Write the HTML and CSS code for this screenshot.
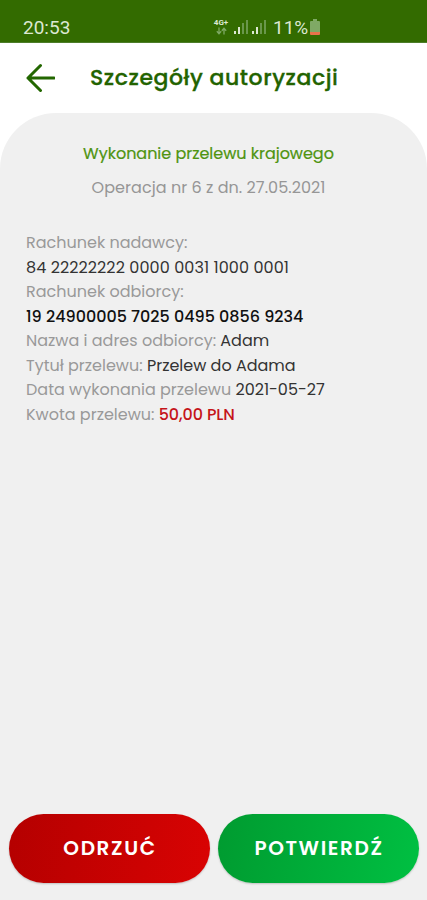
FILE: index.html
```html
<!DOCTYPE html>
<html lang="pl">
<head>
    <meta charset="utf-8">
    <meta name="viewport" content="width=device-width, initial-scale=1">
    <title>Szczegóły autoryzacji</title>
    <link rel="stylesheet" href="styles.css">
</head>

<body>
    <div class="statusBar">
        <span class="clock">20:53</span>
        <div class="statusIcons">
            <div class="network">
                <span>4G+</span>
                <svg width="11" height="8" viewBox="0 0 11 8">
                    <path d="M3 0.5V6.5M0.8 4.3L3 6.7L5.2 4.3M8 7.5V1.5M5.8 3.7L8 1.3L10.2 3.7" />
                </svg>
            </div>
            <svg class="signal" width="15" height="15" viewBox="0 0 15 15">
                <path class="on" d="M0 12h2v3H0zM4 8h2v7H4z" />
                <path class="off" d="M8 4h2v11H8zM12 1h2v14h-2z" />
            </svg>
            <svg class="signal second" width="15" height="15" viewBox="0 0 15 15">
                <path class="on" d="M0 12h2v3H0zM4 8h2v7H4z" />
                <path class="off" d="M8 4h2v11H8zM12 1h2v14h-2z" />
            </svg>
            <span class="percent">11%</span>
            <svg class="battery" width="10" height="16" viewBox="0 0 10 16">
                <path fill="#7fa965" d="M3 0h4v2h2q1 0 1 1v10H0V3q0-1 1-1h2z" />
                <path fill="#e8734a" d="M0 13h10v2q0 1-1 1H1q-1 0-1-1z" />
            </svg>
        </div>
    </div>

    <div class="header">
        <svg class="back" width="30" height="30" viewBox="0 0 30 30">
            <path d="M15.5 2.5L3 15L15.5 27.5M3 15H29" />
        </svg>
        <h1>Szczegóły autoryzacji</h1>
    </div>

    <div class="content">
        <h2>Wykonanie przelewu krajowego</h2>
        <p class="operation">Operacja nr 6 z dn. 27.05.2021</p>

        <div class="details">
            <p class="label">Rachunek nadawcy:</p>
            <p class="account">84 22222222 0000 0031 1000 0001</p>
            <p class="label">Rachunek odbiorcy:</p>
            <p class="account strong">19 24900005 7025 0495 0856 9234</p>
            <p class="label">Nazwa i adres odbiorcy: <span class="value">Adam</span></p>
            <p class="label">Tytuł przelewu: <span class="value">Przelew do Adama</span></p>
            <p class="label">Data wykonania przelewu <span class="value">2021-05-27</span></p>
            <p class="label">Kwota przelewu: <span class="amount">50,00 PLN</span></p>
        </div>

        <div class="buttons">
            <button type="button" class="button reject">ODRZUĆ</button>
            <button type="button" class="button confirm">POTWIERDŹ</button>
        </div>
    </div>
</body>
</html>
```
FILE: styles.css
```css
* {
    box-sizing: border-box;
}

body {
    margin: 0;
    height: 900px;
    display: flex;
    flex-direction: column;
    background: #ffffff;
    font-family: Poppins, Inter, sans-serif;
    overflow: hidden;
}

h1, h2, p {
    margin: 0;
}

.statusBar {
    height: 43px;
    flex: none;
    display: flex;
    align-items: flex-start;
    padding: 18px 0 0 23px;
    background: #336b00;
    border-bottom: 1px solid #4d7d2a;
    color: #dce8d2;
    font-family: Roboto, sans-serif;
    font-size: 19px;
    line-height: 20px;
}

.clock {
    width: 190px;
}

.statusIcons {
    display: flex;
    align-items: flex-start;
}

.network {
    width: 21px;
    display: flex;
    flex-direction: column;
    align-items: center;
    padding: 1px 5px 0 0;
    font-size: 8px;
    font-weight: bold;
    line-height: 8px;
}

.network svg {
    fill: none;
    stroke: #7fa965;
    stroke-width: 1.3;
}

.signal {
    margin-top: 1px;
}

.second {
    margin-left: 3px;
}

.on {
    fill: #dce8d2;
}

.off {
    fill: #6a974c;
}

.percent {
    width: 37px;
    margin-left: 6px;
}

.battery {
    margin-top: 1px;
}

.header {
    height: 70px;
    flex: none;
    display: flex;
    align-items: center;
    padding-left: 25px;
}

.back {
    fill: none;
    stroke: #236700;
    stroke-width: 3;
    stroke-linecap: round;
    stroke-linejoin: round;
}

h1 {
    margin-left: 35px;
    color: #236300;
    font-size: 22px;
    font-weight: 500;
    letter-spacing: 0.55px;
    line-height: 30px;
    padding-bottom: 1px;
    white-space: nowrap;
    -webkit-text-stroke: 0.3px #236300;
}

.content {
    flex: 1;
    display: flex;
    flex-direction: column;
    padding: 29px 8px 17px 9px;
    background: #f0f0f0;
    border-radius: 56px 56px 0 0;
}

h2 {
    padding-right: 11px;
    color: #4f9410;
    font-size: 16px;
    font-weight: 400;
    letter-spacing: -0.02px;
    line-height: 24px;
    text-align: center;
    -webkit-text-stroke: 0.2px #4f9410;
}

.operation {
    margin-top: 10px;
    padding-right: 11px;
    color: #969696;
    font-size: 16px;
    letter-spacing: 0.05px;
    line-height: 24px;
    text-align: center;
}

.details {
    flex: 1;
    padding: 31px 0 0 17px;
    font-size: 16px;
    line-height: 24.5px;
    white-space: nowrap;
}

.label {
    color: #999999;
}

.account,
.value {
    color: #333333;
}

.account {
    letter-spacing: 0.08px;
}

.strong {
    color: #111111;
    font-weight: 500;
    letter-spacing: 0;
}

.amount {
    color: #c5151a;
    font-weight: 500;
    letter-spacing: -0.1px;
}

.buttons {
    display: flex;
    gap: 8px;
}

.button {
    flex: 1;
    height: 69px;
    padding: 0 0 2px 1px;
    border: none;
    border-radius: 35px;
    box-shadow: 0 1px 2px rgba(0, 0, 0, 0.2);
    color: #ffffff;
    font-family: inherit;
    font-size: 20px;
    font-weight: 600;
    letter-spacing: 1.6px;
}

.reject {
    background: linear-gradient(100deg, #b40000, #d90303);
}

.confirm {
    background: linear-gradient(100deg, #009b30, #00c042);
}
```
